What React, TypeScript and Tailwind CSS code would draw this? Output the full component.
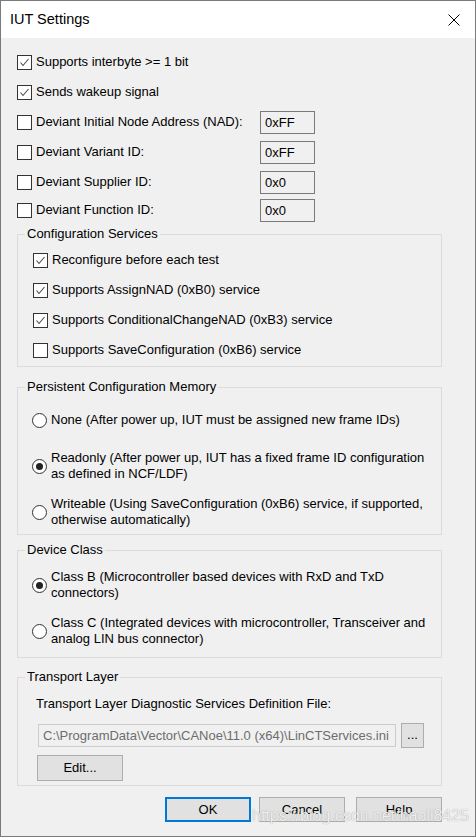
import type { ReactNode } from 'react';

function CheckBox({ checked }: { checked?: boolean }) {
  return (
    <span className="flex h-[15px] w-[15px] shrink-0 items-center justify-center border border-[#333333] bg-white">
      {checked && (
        <svg width="13" height="13" viewBox="0 0 13 13">
          <path d="M2.5 6.5 L5 9.5 L10.5 3" fill="none" stroke="#4a4a4a" strokeWidth="1.1" />
        </svg>
      )}
    </span>
  );
}

function Radio({ checked }: { checked?: boolean }) {
  return (
    <span className="flex h-[15px] w-[15px] shrink-0 items-center justify-center rounded-full border border-[#333333] bg-white">
      {checked && <span className="h-[7px] w-[7px] rounded-full bg-[#222222]" />}
    </span>
  );
}

function CheckRow({ label, checked, h = 'h-[30px]' }: { label: string; checked?: boolean; h?: string }) {
  return (
    <div className={`flex items-center gap-[4px] ${h}`}>
      <CheckBox checked={checked} />
      <span className="leading-[16px]">{label}</span>
    </div>
  );
}

function ValueRow({ label, value, h = 'h-[30px]' }: { label: string; value: string; h?: string }) {
  return (
    <div className={`flex items-center ${h}`}>
      <div className="flex w-[243px] items-center gap-[4px]">
        <CheckBox />
        <span className="leading-[16px]">{label}</span>
      </div>
      <input
        readOnly
        value={value}
        className="h-[23px] w-[55px] border border-[#7a7a7a] bg-[#f0f0f0] px-[4px] text-[13px] text-black outline-none"
      />
    </div>
  );
}

function RadioRow({ checked, children, className = '' }: { checked?: boolean; children: ReactNode; className?: string }) {
  return (
    <div className={`flex items-center gap-[4px] ${className}`}>
      <Radio checked={checked} />
      <span className="whitespace-nowrap leading-[16px]">{children}</span>
    </div>
  );
}

function Group({ title, className = '', children }: { title: string; className?: string; children: ReactNode }) {
  return (
    <fieldset className={`border border-[#dcdcdc] px-0 ${className}`}>
      <legend className="ml-[7px] px-[2px] leading-[16px]">{title}</legend>
      {children}
    </fieldset>
  );
}

function Button({ children, className = '' }: { children: ReactNode; className?: string }) {
  return (
    <button className={`flex items-center justify-center bg-[#e1e1e1] text-[13px] text-black ${className}`}>
      {children}
    </button>
  );
}

export default function App() {
  return (
    <div className="relative flex h-[837px] w-[476px] flex-col overflow-hidden border border-[#7a7a7a] bg-[#f0f0f0] font-['Liberation_Sans',Arial,sans-serif] text-[13px] text-black">
      <div className="flex h-[37px] shrink-0 items-center justify-between bg-white pl-[9px] pr-[15px]">
        <span className="text-[14.5px]">IUT Settings</span>
        <svg width="12" height="12" viewBox="0 0 12 12">
          <path d="M0.5 0.5 L11.5 11.5 M11.5 0.5 L0.5 11.5" stroke="#000" strokeWidth="1" />
        </svg>
      </div>

      <div className="flex flex-col pl-[16px] pr-[33px] pt-[9px]">
        <CheckRow label="Supports interbyte >= 1 bit" checked />
        <CheckRow label="Sends wakeup signal" checked />
        <ValueRow label="Deviant Initial Node Address (NAD):" value="0xFF" />
        <ValueRow label="Deviant Variant ID:" value="0xFF" />
        <ValueRow label="Deviant Supplier ID:" value="0x0" />
        <ValueRow label="Deviant Function ID:" value="0x0" h="h-[26px]" />

        <Group title="Configuration Services" className="mt-[3px]">
          <div className="flex flex-col pb-[1px] pl-[15px] pt-[3px]">
            <CheckRow label="Reconfigure before each test" checked />
            <CheckRow label="Supports AssignNAD (0xB0) service" checked />
            <CheckRow label="Supports ConditionalChangeNAD (0xB3) service" checked />
            <CheckRow label="Supports SaveConfiguration (0xB6) service" />
          </div>
        </Group>

        <Group title="Persistent Configuration Memory" className="mt-[12px]">
          <div className="flex flex-col pb-[6px] pl-[14px] pt-[17px]">
            <RadioRow>None (After power up, IUT must be assigned new frame IDs)</RadioRow>
            <RadioRow checked className="mt-[22px]">
              Readonly (After power up, IUT has a fixed frame ID configuration
              <br />
              as defined in NCF/LDF)
            </RadioRow>
            <RadioRow className="mt-[14px]">
              Writeable (Using SaveConfiguration (0xB6) service, if supported,
              <br />
              otherwise automatically)
            </RadioRow>
          </div>
        </Group>

        <Group title="Device Class" className="mt-[7px]">
          <div className="flex flex-col pb-[10px] pl-[14px] pt-[11px]">
            <RadioRow checked>
              Class B (Microcontroller based devices with RxD and TxD
              <br />
              connectors)
            </RadioRow>
            <RadioRow className="mt-[14px]">
              Class C (Integrated devices with microcontroller, Transceiver and
              <br />
              analog LIN bus connector)
            </RadioRow>
          </div>
        </Group>

        <Group title="Transport Layer" className="mt-[11px]">
          <div className="flex flex-col pb-[4px] pl-[18px] pt-[11px]">
            <span className="leading-[16px]">Transport Layer Diagnostic Services Definition File:</span>
            <div className="mt-[11px] flex h-[25px] items-center gap-[5px] pl-[2px]">
              <input
                readOnly
                value="C:\ProgramData\Vector\CANoe\11.0 (x64)\LinCTServices.ini"
                className="h-[23px] w-[358px] border border-[#cccccc] bg-[#f0f0f0] px-[4px] text-[13px] text-[#6d6d6d] outline-none"
              />
              <Button className="h-[25px] w-[23px] border border-[#adadad] pb-[2px]">...</Button>
            </div>
            <Button className="ml-[1px] mt-[7px] h-[26px] w-[86px] border border-[#adadad]">Edit...</Button>
          </div>
        </Group>

        <div className="mt-[11px] flex justify-end">
          <Button className="h-[25px] w-[86px] border-2 border-[#0078d7]">OK</Button>
          <Button className="ml-[8px] h-[25px] w-[86px] border border-[#adadad]">Cancel</Button>
          <Button className="ml-[11px] h-[25px] w-[86px] border border-[#adadad]">Help</Button>
        </div>
      </div>

      <span className="pointer-events-none absolute left-[251px] top-[806px] text-[16px] leading-[18px] text-[#ffffffd9] [text-shadow:0_0_1px_#8c8c8c]">
        https://blog.csdn.net/haoli8425
      </span>
    </div>
  );
}
